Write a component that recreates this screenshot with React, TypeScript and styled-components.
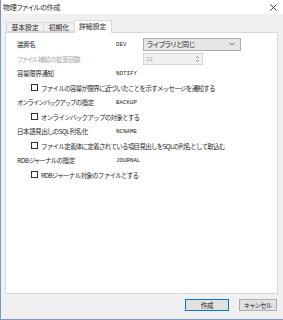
import React from 'react';
import styled, { createGlobalStyle } from 'styled-components';

const GlobalStyle = createGlobalStyle`
  html, body {
    margin: 0;
    padding: 0;
    background: #f0f0f0;
  }
  body {
    font-family: "Noto Sans CJK JP", "Noto Sans", sans-serif;
    font-feature-settings: "palt";
    color: #1e1e1e;
  }
`;

const Window = styled.div`
  width: 283px;
  height: 320px;
  box-sizing: border-box;
  background: #f0f0f0;
  border-left: 1px solid #7d98c0;
  border-bottom: 1px solid #7d98c0;
  display: flex;
  flex-direction: column;
  overflow: hidden;
`;

const TitleBar = styled.div`
  height: 14px;
  background: #fff;
  display: flex;
  align-items: center;
  justify-content: space-between;
  padding: 0 6px 0 2px;
`;

const Title = styled.span`
  font-size: 7px;
  letter-spacing: -0.2px;
  line-height: 14px;
  color: #2a2a2a;
`;

const Body = styled.div`
  flex: 1;
  display: flex;
  flex-direction: column;
  padding: 6px 5px 0 4px;
`;

const TabStrip = styled.div`
  display: flex;
  align-items: flex-end;
  height: 12px;
  padding-left: 1px;
`;

const Tab = styled.div<{ $active?: boolean }>`
  box-sizing: border-box;
  height: ${(p) => (p.$active ? '13px' : '10px')};
  margin-bottom: ${(p) => (p.$active ? '-1px' : '0')};
  padding: 0 4.5px;
  font-size: 6.8px;
  line-height: ${(p) => (p.$active ? '11px' : '9px')};
  background: ${(p) => (p.$active ? '#fff' : '#f0f0f0')};
  border: 1px solid #d9d9d9;
  border-bottom: ${(p) => (p.$active ? 'none' : '1px solid #d9d9d9')};
  margin-right: ${(p) => (p.$active ? '0' : '-1px')};
  position: relative;
  z-index: ${(p) => (p.$active ? 2 : 1)};
`;

const Panel = styled.div`
  box-sizing: border-box;
  height: 262px;
  background: #fff;
  border: 1px solid #d9d9d9;
  padding: 4px 0 0 11px;
  display: flex;
  flex-direction: column;
`;

const Row = styled.div<{ $indent?: boolean }>`
  height: 14.5px;
  display: flex;
  align-items: center;
  padding-left: ${(p) => (p.$indent ? '14px' : '0')};
`;

const Label = styled.span<{ $disabled?: boolean }>`
  width: 99px;
  flex-shrink: 0;
  font-size: 6.5px;
  letter-spacing: -0.4px;
  white-space: nowrap;
  color: ${(p) => (p.$disabled ? '#a6a6a6' : '#1e1e1e')};
`;

const Code = styled.span`
  width: 27px;
  flex-shrink: 0;
  font-family: "Liberation Mono", monospace;
  font-size: 5.8px;
  color: #1e1e1e;
`;

const Select = styled.div`
  box-sizing: border-box;
  width: 98px;
  height: 13px;
  background: #e5e5e5;
  border: 1px solid #acacac;
  display: flex;
  align-items: center;
  justify-content: space-between;
  padding: 0 5px 0 3px;
  font-size: 7px;
  letter-spacing: -0.2px;
`;

const Spin = styled.div`
  box-sizing: border-box;
  width: 60px;
  height: 12px;
  background: #f0f0f0;
  border: 1px solid #d6d6d6;
  display: flex;
  align-items: center;
  justify-content: space-between;
  padding: 0 2px 0 2px;
  font-family: "Liberation Sans", sans-serif;
  font-size: 6px;
  color: #a6a6a6;
`;

const CheckRow = styled.label`
  display: flex;
  align-items: center;
  gap: 3px;
  font-size: 6.5px;
  letter-spacing: -0.7px;
  font-feature-settings: normal;
  white-space: nowrap;
`;

const Box = styled.span`
  box-sizing: border-box;
  width: 7px;
  height: 7px;
  border: 1px solid #333;
  background: #fff;
  flex-shrink: 0;
`;

const ButtonRow = styled.div`
  display: flex;
  justify-content: flex-end;
  gap: 10px;
  padding: 5px 1px 0 0;
`;

const Button = styled.div<{ $primary?: boolean }>`
  box-sizing: border-box;
  width: ${(p) => (p.$primary ? '44px' : '38px')};
  height: 12px;
  background: #e1e1e1;
  border: 1px solid ${(p) => (p.$primary ? '#0078d7' : '#adadad')};
  display: flex;
  align-items: center;
  justify-content: center;
  font-size: 6.5px;
  letter-spacing: -0.3px;
`;

const Chevron = () => (
  <svg width="6" height="4" viewBox="0 0 6 4">
    <path d="M0.5 0.5 L3 3 L5.5 0.5" fill="none" stroke="#555" strokeWidth="0.8" />
  </svg>
);

const SpinArrows = () => (
  <svg width="5" height="8" viewBox="0 0 5 8">
    <path d="M1 3 L2.5 1.5 L4 3" fill="none" stroke="#777" strokeWidth="0.8" />
    <path d="M1 5 L2.5 6.5 L4 5" fill="none" stroke="#777" strokeWidth="0.8" />
  </svg>
);

const CloseIcon = () => (
  <svg width="7" height="7" viewBox="0 0 7 7">
    <path d="M0.5 0.5 L6.5 6.5 M6.5 0.5 L0.5 6.5" stroke="#111" strokeWidth="0.8" />
  </svg>
);

const options = [
  { label: '容量限界通知', code: 'NOTIFY', check: 'ファイルの容量が限界に近づいたことを示すメッセージを通知する' },
  { label: 'オンラインバックアップの指定', code: 'BACKUP', check: 'オンラインバックアップの対象とする' },
  { label: '日本語見出しのSQL列名化', code: 'NCNAME', check: 'ファイル定義体に定義されている項目見出しをSQLの列名として取込む' },
  { label: 'RDBジャーナルの指定', code: 'JOURNAL', check: 'RDBジャーナル対象のファイルとする' },
];

export default function App() {
  return (
    <>
      <GlobalStyle />
      <Window>
        <TitleBar>
          <Title>物理ファイルの作成</Title>
          <CloseIcon />
        </TitleBar>
        <Body>
          <TabStrip>
            <Tab>基本設定</Tab>
            <Tab>初期化</Tab>
            <Tab $active>詳細設定</Tab>
          </TabStrip>
          <Panel>
            <Row>
              <Label>装置名</Label>
              <Code>DEV</Code>
              <Select>
                <span>ライブラリと同じ</span>
                <Chevron />
              </Select>
            </Row>
            <Row>
              <Label $disabled>ファイル補給の拡張回数</Label>
              <Code />
              <Spin>
                <span>13</span>
                <SpinArrows />
              </Spin>
            </Row>
            {options.map((o) => (
              <React.Fragment key={o.code}>
                <Row>
                  <Label>{o.label}</Label>
                  <Code>{o.code}</Code>
                </Row>
                <Row $indent>
                  <CheckRow>
                    <Box />
                    {o.check}
                  </CheckRow>
                </Row>
              </React.Fragment>
            ))}
          </Panel>
          <ButtonRow>
            <Button $primary>作成</Button>
            <Button>キャンセル</Button>
          </ButtonRow>
        </Body>
      </Window>
    </>
  );
}
